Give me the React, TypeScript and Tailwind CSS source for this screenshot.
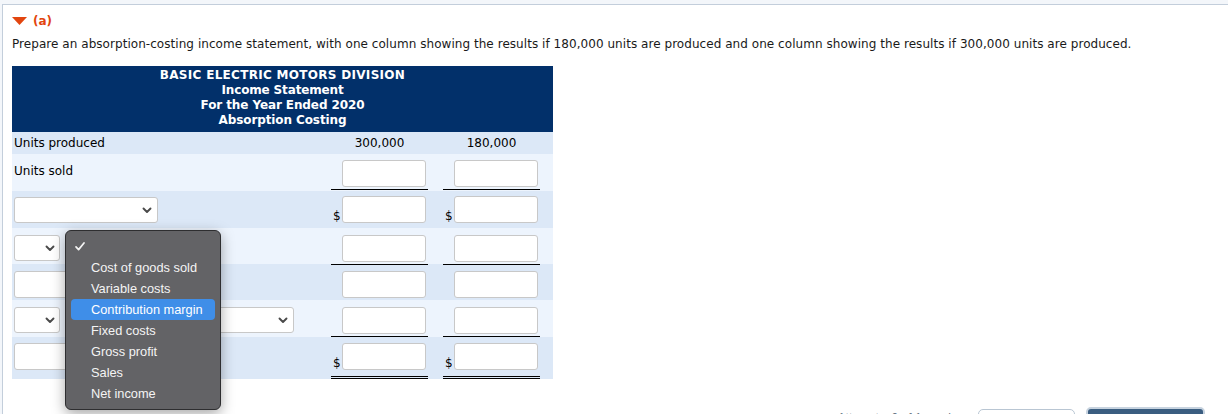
import React from "react";

const Chevron = () => (
  <svg width="10" height="7" viewBox="0 0 10 7" className="shrink-0">
    <path d="M1.5 1.5l3.5 3.5 3.5-3.5" fill="none" stroke="#4a4a4a" strokeWidth="1.9" strokeLinecap="round" strokeLinejoin="round" />
  </svg>
);

const Cell = ({ dollar, line }: { dollar?: boolean; line?: "single" | "double" }) => (
  <div className="pl-[2px] flex flex-col">
    <div className="flex items-end w-[97px]">
      <span className="w-[11px] text-[12px] leading-[14px] pl-[2px] text-black">{dollar ? "$" : ""}</span>
      <div className="w-[84px] h-[27px] bg-white border border-[#c8c8c8] rounded-[3px]" />
    </div>
    {line === "single" && <div className="w-[97px] mt-[2px] border-b border-black" />}
    {line === "double" && <div className="w-[97px] mt-[6px] h-[3px] border-y border-black" />}
  </div>
);

const items = ["Cost of goods sold", "Variable costs", "Contribution margin", "Fixed costs", "Gross profit", "Sales", "Net income"];

export default function App() {
  return (
    <div className="w-[1228px] h-[414px] overflow-hidden bg-[#f3f6fa] pt-[4px] pl-[2px] font-['DejaVu_Sans',Verdana,sans-serif]">
      <div className="h-full bg-white border-t border-l border-[#c3cedb] pl-[9px] pt-[10px]">
        <div className="flex items-center gap-[6px] h-[12px]">
          <svg width="15" height="8" viewBox="0 0 15 8"><path d="M0 0h15L7.5 8z" fill="#e2450f" /></svg>
          <span className="text-[#e2450f] font-bold text-[12px] leading-[12px]">(a)</span>
        </div>
        <div className="mt-[10px] text-[12px] leading-[14px] tracking-[0.05px] text-[#1a1a1a] whitespace-nowrap">
          Prepare an absorption-costing income statement, with one column showing the results if 180,000 units are produced and one column showing the results if 300,000 units are produced.
        </div>
        <div className="relative mt-[15px] w-[541px]">
          <div className="h-[66px] bg-[#02306a] text-white font-bold text-[12px] leading-[15px] text-center pt-[2px]">
            <div className="tracking-[0.3px]">BASIC ELECTRIC MOTORS DIVISION</div>
            <div className="tracking-[-0.15px]">Income Statement</div>
            <div className="tracking-[-0.1px]">For the Year Ended 2020</div>
            <div className="tracking-[-0.1px]">Absorption Costing</div>
          </div>
          {/* row 1 */}
          <div className="h-[22px] bg-[#dce8f7] grid grid-cols-[317px_112px_112px] items-center text-[12px] text-black">
            <div className="pl-[2px]">Units produced</div>
            <div className="pl-[2px] w-[99px] text-center">300,000</div>
            <div className="pl-[2px] w-[99px] text-center">180,000</div>
          </div>
          {/* row 2 */}
          <div className="h-[37px] bg-[#edf4fd] grid grid-cols-[317px_112px_112px] pt-[6px] text-[12px] text-black">
            <div className="pl-[2px] pt-[2px]">Units sold</div>
            <Cell line="single" />
            <Cell line="single" />
          </div>
          {/* row 3 */}
          <div className="h-[37px] bg-[#dce8f7] grid grid-cols-[317px_112px_112px] pt-[5px]">
            <div className="pl-[2px] pt-[1px]">
              <div className="w-[144px] h-[26px] bg-white border border-[#c8c8c8] rounded-[3px] flex items-center justify-end pr-[5px]">
                <Chevron />
              </div>
            </div>
            <Cell dollar />
            <Cell dollar />
          </div>
          {/* row 4 */}
          <div className="h-[36px] bg-[#edf4fd] grid grid-cols-[317px_112px_112px] pt-[7px]">
            <div className="pl-[2px]">
              <div className="w-[46px] h-[26px] bg-white border border-[#c8c8c8] rounded-[3px] flex items-center justify-end pr-[4px]">
                <Chevron />
              </div>
            </div>
            <Cell line="single" />
            <Cell line="single" />
          </div>
          {/* row 5 */}
          <div className="h-[36px] bg-[#dce8f7] grid grid-cols-[317px_112px_112px] pt-[7px]">
            <div className="pl-[2px]">
              <div className="w-[120px] h-[27px] bg-white border border-[#c8c8c8] rounded-[3px]" />
            </div>
            <Cell />
            <Cell />
          </div>
          {/* row 6 */}
          <div className="h-[37px] bg-[#edf4fd] grid grid-cols-[317px_112px_112px] pt-[7px]">
            <div className="pl-[2px] flex gap-[6px]">
              <div className="w-[46px] h-[26px] bg-white border border-[#c8c8c8] rounded-[3px] flex items-center justify-end pr-[4px]">
                <Chevron />
              </div>
              <div className="w-[228px] h-[26px] bg-white border border-[#c8c8c8] rounded-[3px] flex items-center justify-end pr-[5px]">
                <Chevron />
              </div>
            </div>
            <Cell line="single" />
            <Cell line="single" />
          </div>
          {/* row 7 */}
          <div className="h-[42px] bg-[#dce8f7] grid grid-cols-[317px_112px_112px] pt-[6px]">
            <div className="pl-[2px]">
              <div className="w-[120px] h-[27px] bg-white border border-[#c8c8c8] rounded-[3px]" />
            </div>
            <Cell dollar line="double" />
            <Cell dollar line="double" />
          </div>

          {/* dropdown popup */}
          <div className="absolute left-[53px] top-[164px] w-[156px] h-[180px] rounded-[6px] bg-[#636366] border border-[#2e2e30] shadow-[0_4px_14px_rgba(0,0,0,0.35)] px-[5px] pt-[5px] font-['Liberation_Sans',Arial,sans-serif] text-[12.8px] text-[#f4f4f4]">
            <div className="h-[21px] flex items-center pl-[4px]">
              <svg width="10" height="9" viewBox="0 0 10 9"><path d="M1 4.8l2.6 2.8L9 1" fill="none" stroke="#f4f4f4" strokeWidth="1.7" strokeLinecap="round" strokeLinejoin="round" /></svg>
            </div>
            {items.map((t, i) => (
              <div key={t} className={`h-[21px] flex items-center pl-[20px] rounded-[4px] ${i === 2 ? "bg-[#3f8ee8] text-white" : ""}`}>
                {t}
              </div>
            ))}
          </div>
        </div>
        {/* bottom bar, mostly cut off */}
        <div className="mt-[28px] flex items-start justify-end pr-[23px] gap-[11px]">
          <span className="mt-[2px] mr-[16px] text-[12px] text-[#6b7885] font-['Liberation_Sans',Arial,sans-serif]">Attempts: 0 of 1 used</span>
          <div className="mt-[2px] w-[97px] h-[30px] rounded-[5px] border border-[#b9c6d3] bg-white" />
          <div className="w-[119px] h-[30px] rounded-[5px] bg-[#3a5d80] border-2 border-[#c7d3df]" />
        </div>
      </div>
    </div>
  );
}
